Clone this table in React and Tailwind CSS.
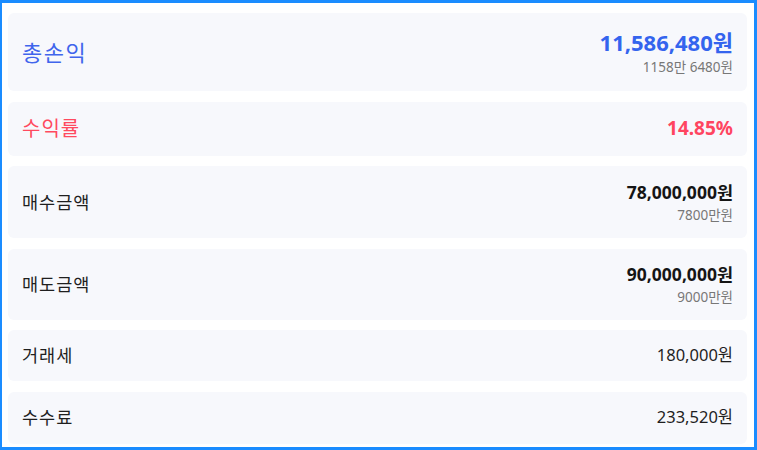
const font = { fontFamily: '"Noto Sans", "Noto Sans CJK KR", sans-serif' };

const rows = [
  { label: "총손익", value: "11,586,480원", sub: "1158만 6480원", kind: "total", h: "h-[78px]" },
  { label: "수익률", value: "14.85%", kind: "rate", h: "h-[54px]" },
  { label: "매수금액", value: "78,000,000원", sub: "7800만원", kind: "amount", h: "h-[72px]" },
  { label: "매도금액", value: "90,000,000원", sub: "9000만원", kind: "amount", h: "h-[71px]" },
  { label: "거래세", value: "180,000원", kind: "plain", h: "h-[51px]" },
  { label: "수수료", value: "233,520원", kind: "plain", h: "h-[52px]" },
];

function Row({ row }) {
  const labelClass =
    row.kind === "total"
      ? "text-[22px] tracking-[1.5px] text-[#4065ec]"
      : row.kind === "rate"
      ? "text-[20px] tracking-[1px] text-[#ff4a5f]"
      : "text-[17.5px] tracking-[1px] text-[#1f1f1f]";
  const valueClass =
    row.kind === "total"
      ? "text-[22px] font-bold text-[#3464ee] leading-[28px]"
      : row.kind === "rate"
      ? "text-[19px] font-bold text-[#ff4560]"
      : row.kind === "amount"
      ? "text-[17.5px] font-bold text-[#151515] leading-[24px]"
      : "text-[16.5px] text-[#1f1f1f]";

  return (
    <div className={`flex items-center justify-between rounded-[6px] bg-[#f7f8fc] px-[14px] ${row.h}`}>
      <span className={labelClass}>{row.label}</span>
      <div className="flex flex-col items-end">
        <span className={valueClass}>{row.value}</span>
        {row.sub && <span className="mt-[1px] text-[13.5px] leading-[20px] text-[#777777]">{row.sub}</span>}
      </div>
    </div>
  );
}

export default function App() {
  return (
    <div
      style={font}
      className="h-[450px] w-[757px] bg-white border-t-[3px] border-r-[3px] border-b-[3px] border-l-2 border-[#1a8cff] pt-[10px] pl-[6px] pr-[7px]"
    >
      <div className="flex flex-col gap-[10.5px]">
        {rows.map((row) => (
          <Row key={row.label} row={row} />
        ))}
      </div>
    </div>
  );
}
